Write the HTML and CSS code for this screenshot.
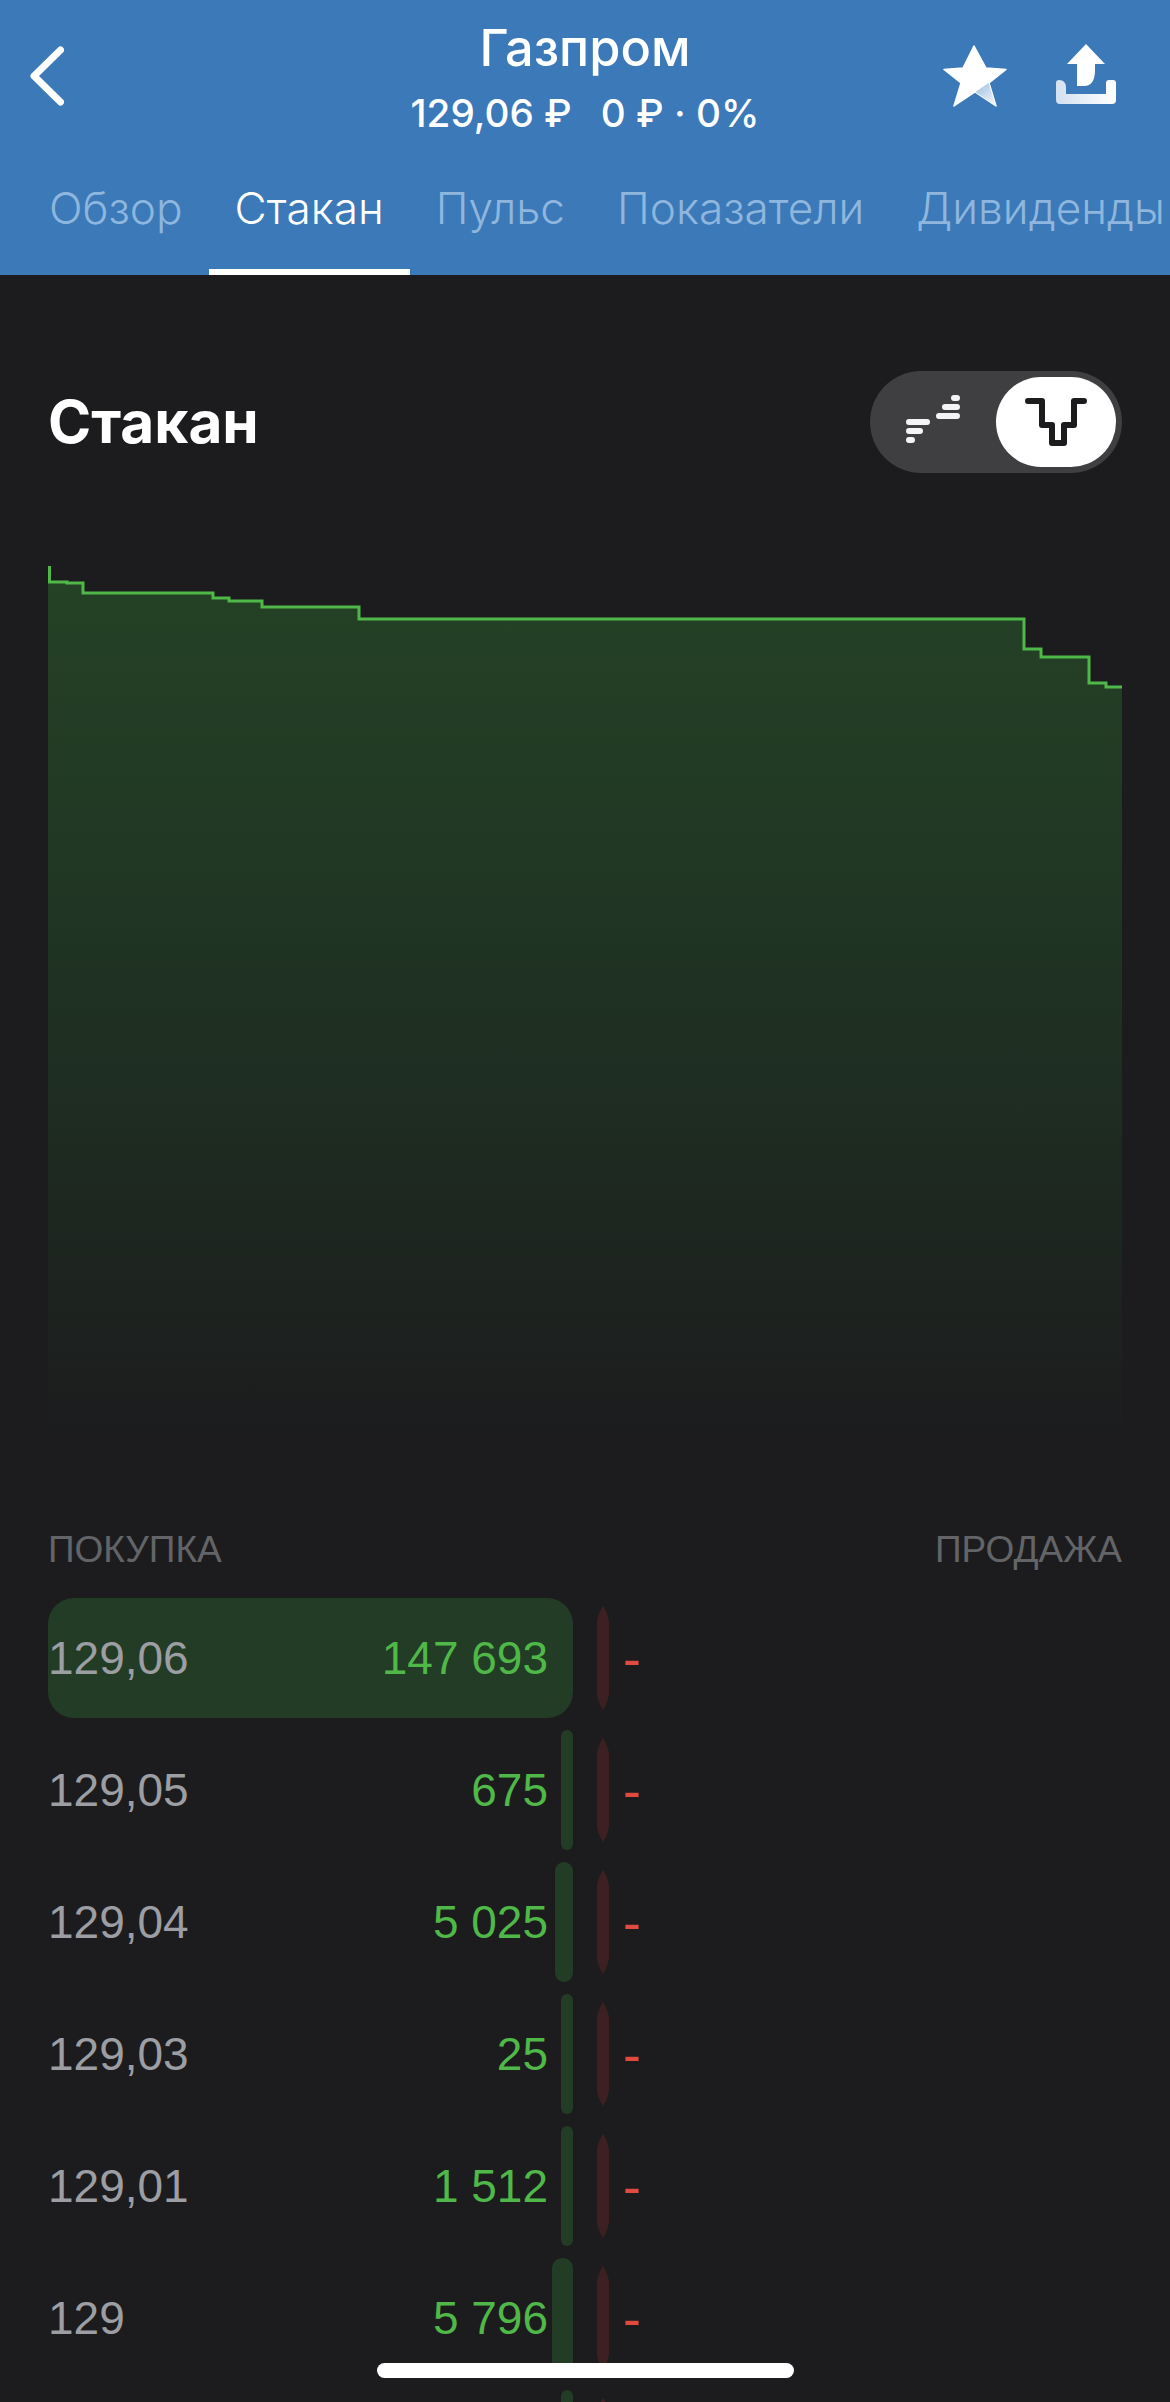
FILE: index.html
```html
<!DOCTYPE html>
<html lang="ru">
<head>
<meta charset="utf-8">
<title>Газпром</title>
<link rel="stylesheet" href="styles.css">
</head>
<body>
<svg class="defs" width="0" height="0"><defs><symbol id="ask" viewBox="0 0 12 104" preserveAspectRatio="none"><path d="M6 0 Q12 10 12 18 V86 Q12 94 6 104 Q0 94 0 86 V18 Q0 10 6 0 Z" fill="#3f2022"/></symbol></defs></svg>
<div class="page">
  <header class="header">
    <div class="topbar">
      <svg class="back" viewBox="0 0 34 60" width="34" height="60"><path d="M30.5 4 L4 30 L30.5 56" fill="none" stroke="#fff" stroke-width="7" stroke-linecap="round" stroke-linejoin="round"/></svg>
      <div class="headline">
        <div class="title">Газпром</div>
        <div class="quote"><span>129,06 ₽</span><span>0 ₽ · 0%</span></div>
      </div>
      <div class="actions">
        <svg class="star" viewBox="0 0 64 62" width="64" height="62"><defs><linearGradient id="sg" x1="0.1" y1="0" x2="0.8" y2="1"><stop offset="0" stop-color="#9fbfdf"/><stop offset="1" stop-color="#f2f6fb"/></linearGradient></defs><path d="M31 1 L43 23 L63 24.5 L46 38 L53 61 L32 47 L11 61 L18 38 L1 24.5 L20 23 Z" fill="#fff" stroke="#fff" stroke-width="1.5" stroke-linejoin="round"/><path d="M32.5 47 L45.5 38 L53 61 Z" fill="url(#sg)" stroke="#fff" stroke-opacity="0"/></svg>
        <svg class="share" viewBox="0 0 60 60" width="60" height="60"><defs><linearGradient id="tg" x1="0" y1="0" x2="1" y2="0"><stop offset="0" stop-color="#d3e1ef"/><stop offset="1" stop-color="#fff"/></linearGradient></defs><path d="M30 0 L49 20 H39 V26 Q39 42 28 42 H21 V20 H11 Z" fill="#fff"/><path d="M0 39 Q0 36 3 36 Q10 36 10 44 V50 H50 V39 Q50 36 53 36 H57 Q60 36 60 39 V56 Q60 60 56 60 H4 Q0 60 0 56 Z" fill="url(#tg)"/></svg>
      </div>
    </div>
    <nav class="tabs">
      <span class="tab">Обзор</span>
      <span class="tab tab-active">Стакан</span>
      <span class="tab">Пульс</span>
      <span class="tab">Показатели</span>
      <span class="tab">Дивиденды</span>
    </nav>
  </header>

  <main class="content">
    <div class="section-head">
      <h1 class="section-title">Стакан</h1>
      <div class="toggle">
        <span class="toggle-off">
          <svg viewBox="0 0 54 48" width="54" height="48" fill="none" stroke="#f4f4f6" stroke-width="6" stroke-linecap="round"><path d="M3 27H21M3 36H14M3 45H6M33 21H51M39 12H51M48 3H51"/></svg>
        </span>
        <span class="toggle-on">
          <svg viewBox="0 0 62 48" width="62" height="48" fill="none" stroke="#1c1c1e" stroke-width="6" stroke-linecap="round" stroke-linejoin="round"><path d="M3 3H17V27H27V45H39V27H49V3H59"/></svg>
        </span>
      </div>
    </div>

    <svg class="chart" viewBox="0 0 1074 877" width="1074" height="877">
      <defs><linearGradient id="area" x1="0" y1="0" x2="0" y2="1"><stop offset="0" stop-color="#244226"/><stop offset="0.3" stop-color="#213924"/><stop offset="0.65" stop-color="#1e2b21"/><stop offset="1" stop-color="#1c1c1e"/></linearGradient></defs>
      <path d="M0 3V19H19V20H35V30H165V35H181V38H214V44H311V56H976V86H993V94H1041V120H1058V124H1074V877H0Z" fill="url(#area)"/>
      <path d="M1.5 3V19H19V20H35V30H165V35H181V38H214V44H311V56H976V86H993V94H1041V120H1058V124H1074" fill="none" stroke="#4fb848" stroke-width="3"/>
    </svg>

    <div class="labels"><span>ПОКУПКА</span><span>ПРОДАЖА</span></div>

    <div class="book">
      <div class="row">
        <div class="bid bid-best"><span class="price">129,06</span><span class="qty">147 693</span></div>
        <svg class="ask-bar"><use href="#ask"/></svg>
        <span class="ask-dash">-</span>
      </div>
      <div class="row">
        <div class="bid"><span class="price">129,05</span><span class="qty">675</span></div>
        <span class="bar bar-12"></span>
        <svg class="ask-bar"><use href="#ask"/></svg>
        <span class="ask-dash">-</span>
      </div>
      <div class="row">
        <div class="bid"><span class="price">129,04</span><span class="qty">5 025</span></div>
        <span class="bar bar-18"></span>
        <svg class="ask-bar"><use href="#ask"/></svg>
        <span class="ask-dash">-</span>
      </div>
      <div class="row">
        <div class="bid"><span class="price">129,03</span><span class="qty">25</span></div>
        <span class="bar bar-12"></span>
        <svg class="ask-bar"><use href="#ask"/></svg>
        <span class="ask-dash">-</span>
      </div>
      <div class="row">
        <div class="bid"><span class="price">129,01</span><span class="qty">1 512</span></div>
        <span class="bar bar-12"></span>
        <svg class="ask-bar"><use href="#ask"/></svg>
        <span class="ask-dash">-</span>
      </div>
      <div class="row">
        <div class="bid"><span class="price">129</span><span class="qty">5 796</span></div>
        <span class="bar bar-21"></span>
        <svg class="ask-bar"><use href="#ask"/></svg>
        <span class="ask-dash">-</span>
      </div>
      <div class="row">
        <div class="bid"></div>
        <span class="bar bar-12"></span>
        <svg class="ask-bar"><use href="#ask"/></svg>
      </div>
    </div>
  </main>
  <div class="home-indicator"></div>
</div>
</body>
</html>
```
FILE: styles.css
```css
* { box-sizing: border-box; }
html, body { margin: 0; padding: 0; }
body { width: 1170px; height: 2402px; overflow: hidden; background: #1c1c1e; font-family: Inter, Roboto, "Liberation Sans", sans-serif; }
.defs { position: absolute; }
.page { position: relative; width: 1170px; height: 2402px; overflow: hidden; }

.header { height: 275px; background: #3b79b9; color: #fff; display: flex; flex-direction: column; }
.topbar { height: 165px; display: flex; align-items: flex-start; position: relative; }
.back { margin: 46px 0 0 30px; flex: none; }
.headline { position: absolute; left: 0; right: 0; top: 20px; text-align: center; }
.title { font-size: 50.5px; font-weight: 500; line-height: 56px; }
.quote { display: flex; justify-content: center; gap: 29px; font-size: 38.7px; font-weight: 500; line-height: 44px; margin-top: 15px; }
.actions { margin-left: auto; display: flex; gap: 49px; padding: 44px 54px 0 0; align-items: flex-start; }
.star { margin-top: 1px; }

.tabs { display: flex; gap: 52px; padding-left: 49px; height: 110px; font-size: 44.2px; font-weight: 300; white-space: nowrap; }
.tab { color: #8fb6dd; line-height: 86px; height: 110px; }
.tab-active { color: #fff; position: relative; }
.tab-active::after { content: ""; position: absolute; left: -26px; right: -26px; bottom: 0; height: 6px; background: #fff; }

.content { padding: 96px 48px 0 48px; }
.section-head { display: flex; justify-content: space-between; align-items: center; height: 102px; }
.section-title { margin: 0; font-size: 58.5px; font-weight: 700; color: #fff; line-height: 102px; }
.toggle { width: 252px; height: 102px; border-radius: 51px; background: #3f3f41; display: flex; align-items: center; justify-content: space-between; padding: 0 6px 0 36px; }
.toggle-off { display: flex; margin-bottom: 6px; }
.toggle-on { width: 120px; height: 90px; background: #fff; border-radius: 45px; display: flex; align-items: center; justify-content: center; }

.chart { display: block; margin: 90px 0 0 0; }

.labels { display: flex; justify-content: space-between; margin-top: 90px; font-family: "Liberation Sans", sans-serif; font-size: 37px; color: #636467; line-height: 40px; }

.book { margin-top: 28px; display: flex; flex-direction: column; gap: 12px; font-family: "Liberation Sans", sans-serif; }
.row { height: 120px; display: flex; align-items: center; position: relative; flex: none; }
.bid { width: 525px; height: 120px; display: flex; justify-content: space-between; align-items: center; padding-right: 25px; font-size: 46px; }
.bid-best { background: #233c26; border-radius: 26px; }
.price { color: #9c9ea3; }
.qty { color: #4fb848; }
.bar { position: absolute; top: 0; bottom: 0; background: #233c26; left: 525px; transform: translateX(-100%); }
.bar-12 { width: 12px; border-radius: 6px; }
.bar-18 { width: 18px; border-radius: 9px; }
.bar-21 { width: 21px; border-radius: 10px; }
.ask-bar { margin-left: 24px; flex: none; width: 12px; height: 104px; }
.ask-dash { margin-left: 14px; font-size: 54px; color: #e04a3f; }

.home-indicator { position: absolute; left: 377px; top: 2363px; width: 417px; height: 15px; border-radius: 8px; background: #fff; }
```
